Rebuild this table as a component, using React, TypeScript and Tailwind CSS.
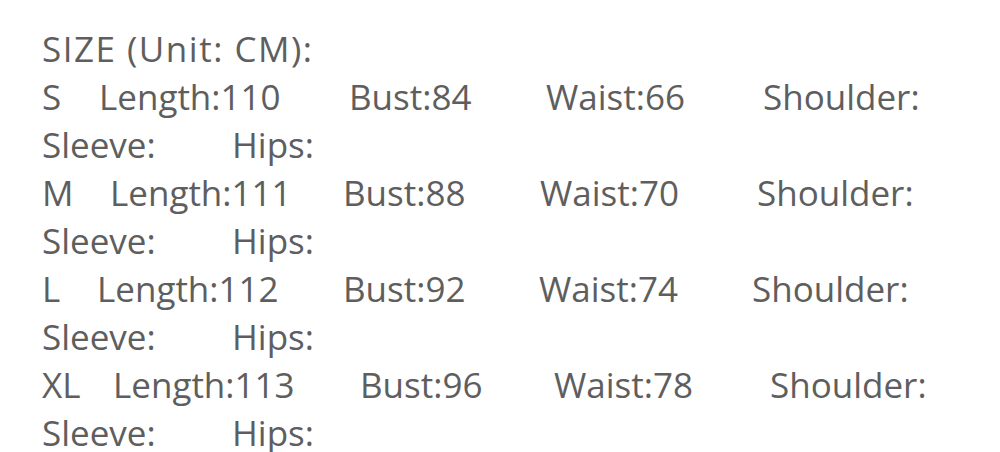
import React from 'react';

interface Cell {
  text: string;
  w?: string;
}

// each visual line of the size chart, with the word columns measured off the picture
const ROWS: Cell[][] = [
  [{ text: 'S', w: 'w-[57px]' }, { text: 'Length:110', w: 'w-[250px]' }, { text: 'Bust:84', w: 'w-[197px]' }, { text: 'Waist:66', w: 'w-[217px]' }, { text: 'Shoulder:' }],
  [{ text: 'Sleeve:', w: 'w-[190px]' }, { text: 'Hips:' }],
  [{ text: 'M', w: 'w-[68px]' }, { text: 'Length:111', w: 'w-[233px]' }, { text: 'Bust:88', w: 'w-[197px]' }, { text: 'Waist:70', w: 'w-[217px]' }, { text: 'Shoulder:' }],
  [{ text: 'Sleeve:', w: 'w-[190px]' }, { text: 'Hips:' }],
  [{ text: 'L', w: 'w-[55px]' }, { text: 'Length:112', w: 'w-[246px]' }, { text: 'Bust:92', w: 'w-[196px]' }, { text: 'Waist:74', w: 'w-[213px]' }, { text: 'Shoulder:' }],
  [{ text: 'Sleeve:', w: 'w-[190px]' }, { text: 'Hips:' }],
  [{ text: 'XL', w: 'w-[71px]' }, { text: 'Length:113', w: 'w-[247px]' }, { text: 'Bust:96', w: 'w-[194px]' }, { text: 'Waist:78', w: 'w-[216px]' }, { text: 'Shoulder:' }],
  [{ text: 'Sleeve:', w: 'w-[190px]' }, { text: 'Hips:' }],
];

export default function App() {
  return (
    <div className="w-[1000px] h-[452px] overflow-hidden bg-white pt-[25px] pl-[42px] text-[35px] leading-[48px] text-[#5e5e5e] font-['Open_Sans',sans-serif]">
      <div className="h-[48px] whitespace-nowrap tracking-[1.5px]">SIZE (Unit: CM):</div>
      {ROWS.map((row, i) => (
        <div key={i} className="flex h-[48px] whitespace-nowrap">
          {row.map((cell, j) => (
            <span key={j} className={`shrink-0 ${cell.w ?? ''}`}>
              {cell.text}
            </span>
          ))}
        </div>
      ))}
    </div>
  );
}
